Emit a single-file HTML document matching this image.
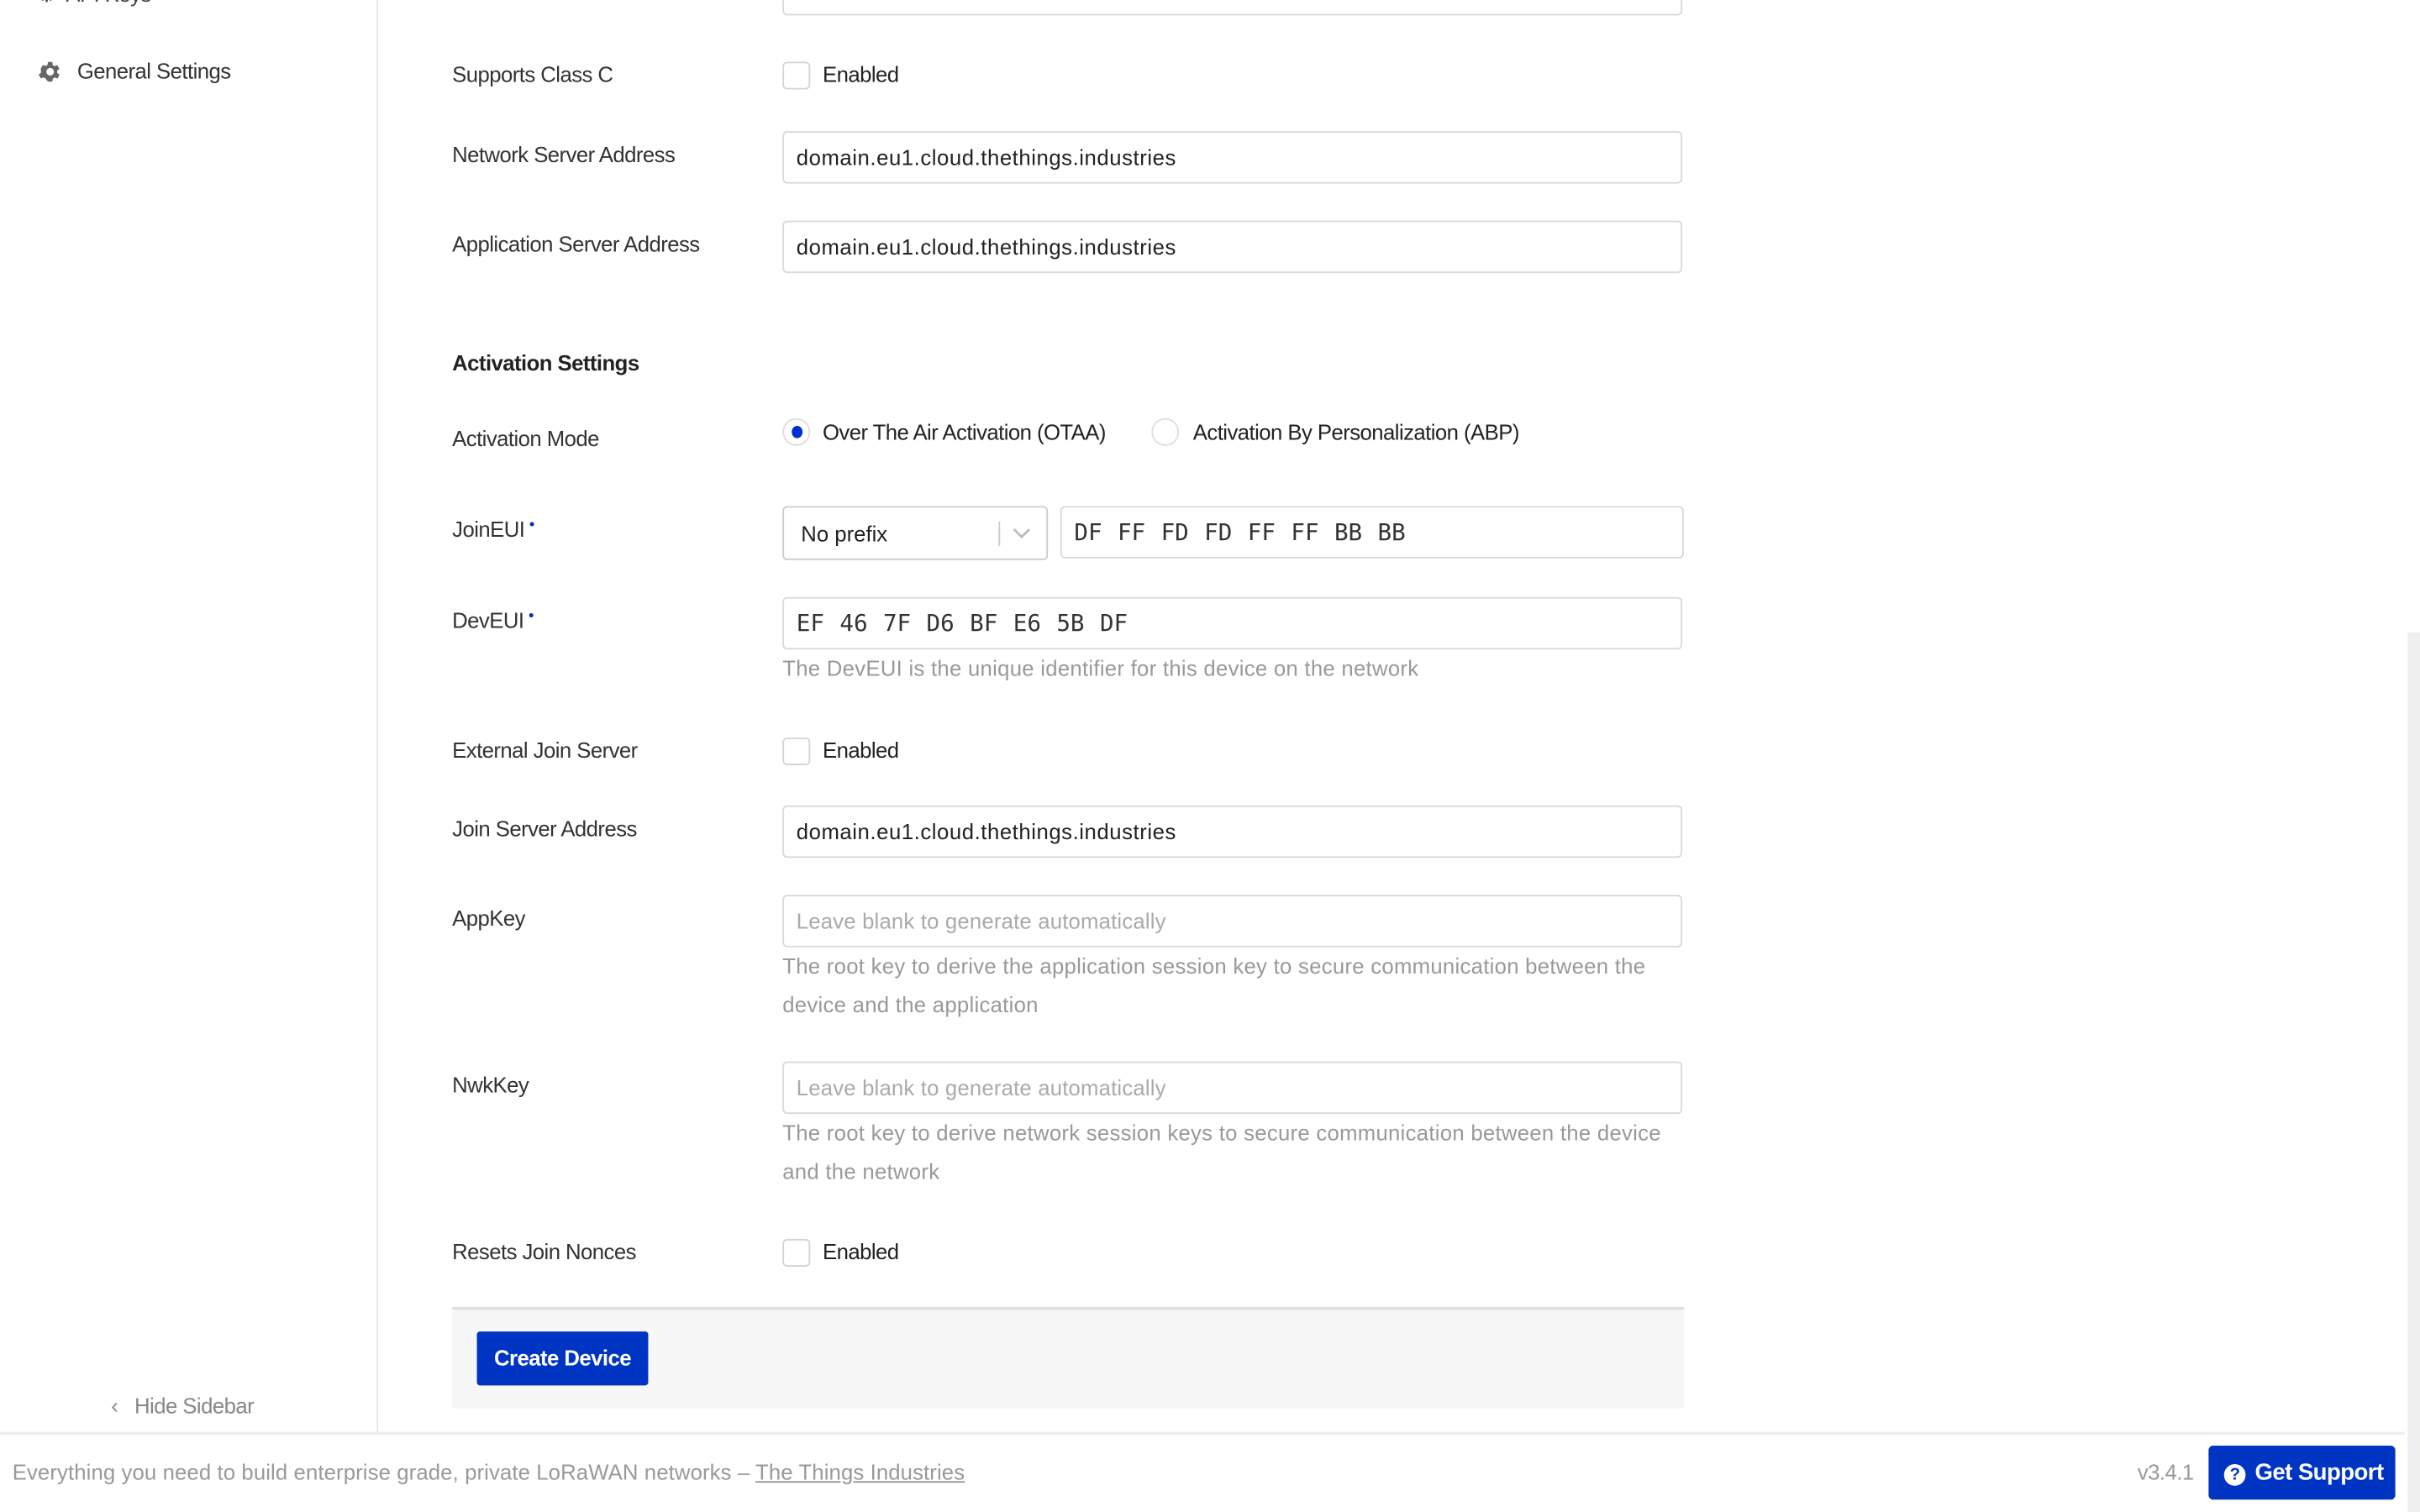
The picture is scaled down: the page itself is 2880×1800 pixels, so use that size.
<!DOCTYPE html>
<html><head><meta charset="utf-8"><style>
html,body{margin:0;padding:0;background:#fff;overflow:hidden}
#w{position:absolute;left:0;top:0;width:1568px;height:980px;transform:scale(1.836735);transform-origin:0 0;font-family:"Liberation Sans",sans-serif;color:#222;font-size:14px;letter-spacing:-0.3px}
.a{position:absolute;white-space:nowrap}
.lbl{position:absolute;left:293px;font-size:14px;color:#333}
.inp{position:absolute;left:507px;width:583px;height:34px;border:1px solid #d9d9d9;border-radius:3px;box-sizing:border-box;padding-left:8px;line-height:33px;font-size:14px;color:#222;letter-spacing:0.3px}
.ph{color:#aaa;letter-spacing:0.1px}
.cb{position:absolute;left:507px;width:18px;height:18px;border:1px solid #d4d4d4;border-radius:3px;box-sizing:border-box}
.cbt{position:absolute;left:533px;font-size:14px;color:#222}
.help{position:absolute;left:507px;font-size:14px;color:#999;line-height:25px;letter-spacing:0.15px}
.mono{font-family:"DejaVu Sans Mono","Liberation Mono",monospace;font-weight:normal;letter-spacing:0;font-size:15px;word-spacing:1px;color:#333}
.req{color:#0030c0;font-size:10px;vertical-align:top;margin-left:3px}
</style></head><body><div id="w">
<div class="a" style="left:244px;top:0;width:1px;height:928px;background:#e8e8e8"></div>
<div class="a" style="left:24px;top:-12px;color:#444">⚙&nbsp; API Keys</div>
<svg class="a" style="left:24px;top:38px" width="17" height="17" viewBox="0 0 24 24"><path fill="#666" d="M19.4 13a7.5 7.5 0 0 0 0-2l2.1-1.6-2-3.5-2.5 1a7 7 0 0 0-1.7-1L15 3h-4l-.4 2.7a7 7 0 0 0-1.7 1l-2.5-1-2 3.5L4.6 11a7.5 7.5 0 0 0 0 2l-2.1 1.6 2 3.5 2.5-1a7 7 0 0 0 1.7 1L11 21h4l.4-2.7a7 7 0 0 0 1.7-1l2.5 1 2-3.5zM13 15.5a3.5 3.5 0 1 1 0-7 3.5 3.5 0 0 1 0 7z" transform="translate(-1 0)"/></svg>
<div class="a" style="left:50px;top:38px;color:#333">General Settings</div>
<div class="a" style="left:72px;top:903px;color:#888">‹&nbsp;&nbsp; Hide Sidebar</div>

<div class="inp" style="top:-24px"></div>
<div class="lbl" style="top:40px">Supports Class C</div>
<div class="cb" style="top:40px"></div><div class="cbt" style="top:40px">Enabled</div>
<div class="lbl" style="top:92px">Network Server Address</div>
<div class="inp" style="top:85px">domain.eu1.cloud.thethings.industries</div>
<div class="lbl" style="top:150px">Application Server Address</div>
<div class="inp" style="top:143px">domain.eu1.cloud.thethings.industries</div>
<div class="lbl" style="top:227px;font-weight:bold;color:#222">Activation Settings</div>
<div class="lbl" style="top:276px">Activation Mode</div>
<div class="a" style="left:507px;top:271px;width:18px;height:18px;border:1px solid #ddd;border-radius:50%;box-sizing:border-box"><div style="position:absolute;left:5px;top:4px;width:7px;height:8px;border-radius:50%;background:#0030d0"></div></div>
<div class="a" style="left:533px;top:272px">Over The Air Activation (OTAA)</div>
<div class="a" style="left:746px;top:271px;width:18px;height:18px;border:1px solid #ddd;border-radius:50%;box-sizing:border-box"></div>
<div class="a" style="left:773px;top:272px">Activation By Personalization (ABP)</div>
<div class="lbl" style="top:335px">JoinEUI<span class="req">•</span></div>
<div class="inp" style="top:328px;width:172px;height:35px;border-color:#ccc;padding-left:11px;line-height:34px;letter-spacing:0">No prefix<span class="a" style="left:139px;top:9px;width:1px;height:16px;background:#ccc"></span><svg class="a" style="left:148px;top:12px" width="12" height="10" viewBox="0 0 12 10"><path d="M1 2l5 5 5-5" stroke="#bbb" stroke-width="1.5" fill="none"/></svg></div>
<div class="inp mono" style="top:328px;left:687px;width:404px;height:34px">DF FF FD FD FF FF BB BB</div>
<div class="lbl" style="top:394px">DevEUI<span class="req">•</span></div>
<div class="inp mono" style="top:387px">EF 46 7F D6 BF E6 5B DF</div>
<div class="help" style="top:421px">The DevEUI is the unique identifier for this device on the network</div>
<div class="lbl" style="top:478px">External Join Server</div>
<div class="cb" style="top:478px"></div><div class="cbt" style="top:478px">Enabled</div>
<div class="lbl" style="top:529px">Join Server Address</div>
<div class="inp" style="top:522px">domain.eu1.cloud.thethings.industries</div>
<div class="lbl" style="top:587px">AppKey</div>
<div class="inp ph" style="top:580px">Leave blank to generate automatically</div>
<div class="help" style="top:614px">The root key to derive the application session key to secure communication between the<br>device and the application</div>
<div class="lbl" style="top:695px">NwkKey</div>
<div class="inp ph" style="top:688px">Leave blank to generate automatically</div>
<div class="help" style="top:722px">The root key to derive network session keys to secure communication between the device<br>and the network</div>
<div class="lbl" style="top:803px">Resets Join Nonces</div>
<div class="cb" style="top:803px"></div><div class="cbt" style="top:803px">Enabled</div>
<div class="a" style="left:293px;top:847px;width:798px;height:66px;background:#f7f7f7;border-top:2px solid #e2e2e2;box-sizing:border-box"></div>
<div class="a" style="left:309px;top:863px;width:111px;height:35px;background:#0035c4;border-radius:2px;color:#fff;font-weight:bold;text-align:center;line-height:35px">Create Device</div>

<div class="a" style="left:1560px;top:410px;width:8px;height:570px;background:#f0f0f0"></div>
<div class="a" style="left:0;top:928px;width:1558px;height:2px;background:#eee"></div>
<div class="a" style="left:8px;top:946px;color:#999;letter-spacing:0.06px">Everything you need to build enterprise grade, private LoRaWAN networks – <span style="text-decoration:underline">The Things Industries</span></div>
<div class="a" style="left:1385px;top:946px;color:#999">v3.4.1</div>
<div class="a" style="left:1431px;top:937px;width:121px;height:35px;background:#0035c4;border-radius:3px;color:#fff;font-weight:bold;line-height:35px;font-size:15px"><span style="display:inline-block;width:14px;height:14px;border-radius:50%;background:#fff;color:#0035c4;font-size:11px;text-align:center;line-height:14px;margin:0 6px 0 10px;vertical-align:0px">?</span>Get Support</div>
</div></body></html>
